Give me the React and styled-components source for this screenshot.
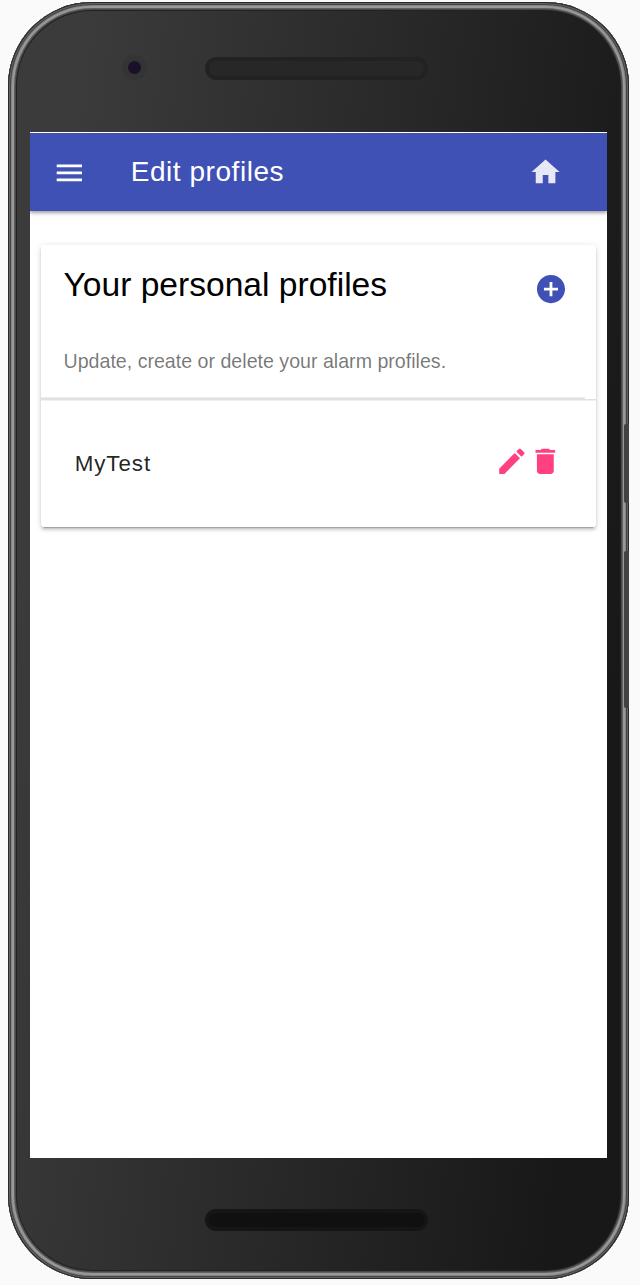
import React from 'react';
import styled, { createGlobalStyle } from 'styled-components';

const GlobalStyle = createGlobalStyle`
  * { box-sizing: border-box; }
  body {
    margin: 0;
    background: #fafafa;
    font-family: "Liberation Sans", Arial, sans-serif;
  }
`;

const Stage = styled.main`
  height: 1285px;
  padding: 2px 0 0 8px;
  overflow: hidden;
`;

const Phone = styled.div`
  position: relative;
  display: flex;
  flex-direction: column;
  width: 621px;
  height: 1277px;
  padding: 0 22px;
  border-radius: 84px;
  background: linear-gradient(97deg, #3b3b3b 80px, #1c1c1c 620px, #181818 690px);
  box-shadow:
    inset 0 0 0 1px #2a2a2a,
    inset 0 0 0 2px #626262,
    inset 0 0 0 3px #444444,
    inset 0 0 0 4px #858585,
    inset 0 0 0 6px #989898,
    inset 0 0 0 7px #606060,
    inset 0 0 0 8px #484848,
    inset 0 0 0 9px #222222;
`;

const SideButton = styled.span`
  position: absolute;
  right: 0;
  top: ${(p) => p.$top}px;
  width: 5px;
  height: ${(p) => p.$height}px;
  border-radius: 2px 0 0 2px;
  background: #424242;
`;

const TopBezel = styled.div`
  display: flex;
  align-items: flex-start;
  flex: none;
  height: 130px;
  padding: 53px 0 0 92px;
`;

const Camera = styled.span`
  width: 25px;
  height: 25px;
  border: 6px solid #343434;
  border-radius: 50%;
  background: #1b1028;
`;

const Speaker = styled.span`
  width: 223px;
  height: ${(p) => (p.$dark ? '22px' : '23px')};
  border: 4px solid ${(p) => (p.$dark ? '#151515' : '#222222')};
  border-radius: 12px;
  background: ${(p) => (p.$dark ? '#101010' : '#272727')};
  margin: ${(p) => (p.$dark ? '0' : '2px 0 0 58px')};
`;

const BottomBezel = styled.div`
  padding: 51px 0 0 175px;
  display: flex;
`;

const Screen = styled.section`
  flex: none;
  width: 577px;
  height: 1026px;
  padding-top: 1px;
  background: #fff;
`;

const Toolbar = styled.header`
  display: flex;
  align-items: center;
  height: 78px;
  padding: 1px 44.4px 0 22.5px;
  background: #3f51b5;
  color: #fff;
  box-shadow: 0 2px 3px rgba(0, 0, 0, 0.3), 0 1px 7px rgba(0, 0, 0, 0.12);
  clip-path: inset(0 0 -12px 0);

  > svg:first-child { margin-top: 1.4px; }
  > svg:last-child { margin-top: -1px; }
`;

const ToolbarTitle = styled.h1`
  flex: 1;
  margin: 0 0 0 44.5px;
  padding-bottom: 2px;
  font-size: 28px;
  font-weight: 400;
  letter-spacing: 0.55px;
  line-height: 34px;
`;

const Icon = styled.svg`
  display: block;
  flex: none;
  width: 33.7px;
  height: 33.7px;
  fill: currentColor;
  opacity: ${(p) => (p.$faded ? 0.87 : 1)};
`;

const Card = styled.article`
  height: 282px;
  margin: 34px 11px 0;
  border-radius: 3px;
  background: #fff;
  box-shadow:
    0 3px 3px rgba(0, 0, 0, 0.14),
    0 4px 1px -3px rgba(0, 0, 0, 0.2),
    0 1px 6px rgba(0, 0, 0, 0.14);
`;

const CardHeader = styled.div`
  display: flex;
  align-items: flex-start;
  justify-content: space-between;
  height: 93px;
  padding: 20px 28px 0 22.5px;
  color: #3f51b5;

  svg { margin-top: 7.4px; }
`;

const CardTitle = styled.h2`
  margin: 0;
  color: #000;
  font-size: 33.6px;
  font-weight: 400;
  line-height: 40px;
`;

const CardText = styled.p`
  height: 59px;
  margin: 0;
  padding: 11px 22.5px 0;
  color: rgba(0, 0, 0, 0.54);
  font-size: 19.62px;
  line-height: 25px;
`;

const Divider = styled.div`
  width: ${(p) => (p.$short ? '544px' : '100%')};
  height: 2px;
  background: ${(p) =>
    p.$short
      ? 'linear-gradient(#eeeeee 1px, #e1e1e1 1px)'
      : 'linear-gradient(#e1e1e1 1px, #f0f0f0 1px)'};
`;

const ProfileRow = styled.div`
  display: flex;
  align-items: center;
  height: 126px;
  padding: 0 34px 0 33.7px;
  color: #ff4081;
`;

const ProfileName = styled.span`
  flex: 1;
  color: rgba(0, 0, 0, 0.87);
  font-size: 22.4px;
  letter-spacing: 0.9px;
  line-height: 28px;
`;

const Actions = styled.div`
  display: flex;
  margin-top: -5.4px;
`;

const MenuIcon = () => (
  <Icon viewBox="0.35 0 24 24"><path d="M3 18h18v-2H3v2zm0-5h18v-2H3v2zm0-7v2h18V6H3z" /></Icon>
);
const HomeIcon = () => (
  <Icon $faded viewBox="0.2 -0.2 24 24"><path d="M10 20v-6h4v6h5v-8h3L12 3 2 12h3v8z" /></Icon>
);
const AddIcon = () => (
  <Icon viewBox="-0.1 -0.2 24 24"><path d="M12 2C6.48 2 2 6.48 2 12s4.48 10 10 10 10-4.48 10-10S17.52 2 12 2zm5 11h-4v4h-2v-4H7v-2h4V7h2v4h4v2z" /></Icon>
);
const EditIcon = () => (
  <Icon viewBox="0 -0.3 24 24"><path d="M3 17.25V21h3.75L17.81 9.94l-3.75-3.75L3 17.25zM20.71 7.04c.39-.39.39-1.02 0-1.41l-2.34-2.34c-.39-.39-1.02-.39-1.41 0l-1.83 1.83 3.75 3.75 1.83-1.83z" /></Icon>
);
const DeleteIcon = () => (
  <Icon viewBox="-0.35 -0.3 24 24"><path d="M6 19c0 1.1.9 2 2 2h8c1.1 0 2-.9 2-2V7H6v12zM19 4h-3.5l-1-1h-5l-1 1H5v2h14V4z" /></Icon>
);

export default function App() {
  return (
    <>
      <GlobalStyle />
      <Stage>
        <Phone>
          <TopBezel>
            <Camera />
            <Speaker />
          </TopBezel>
          <Screen>
            <Toolbar>
              <MenuIcon />
              <ToolbarTitle>Edit profiles</ToolbarTitle>
              <HomeIcon />
            </Toolbar>
            <Card>
              <CardHeader>
                <CardTitle>Your personal profiles</CardTitle>
                <AddIcon />
              </CardHeader>
              <CardText>Update, create or delete your alarm profiles.</CardText>
              <Divider $short />
              <Divider />
              <ProfileRow>
                <ProfileName>MyTest</ProfileName>
                <Actions>
                  <EditIcon />
                  <DeleteIcon />
                </Actions>
              </ProfileRow>
            </Card>
          </Screen>
          <BottomBezel>
            <Speaker $dark />
          </BottomBezel>
          <SideButton $top={422} $height={79} />
          <SideButton $top={549} $height={157} />
        </Phone>
      </Stage>
    </>
  );
}
